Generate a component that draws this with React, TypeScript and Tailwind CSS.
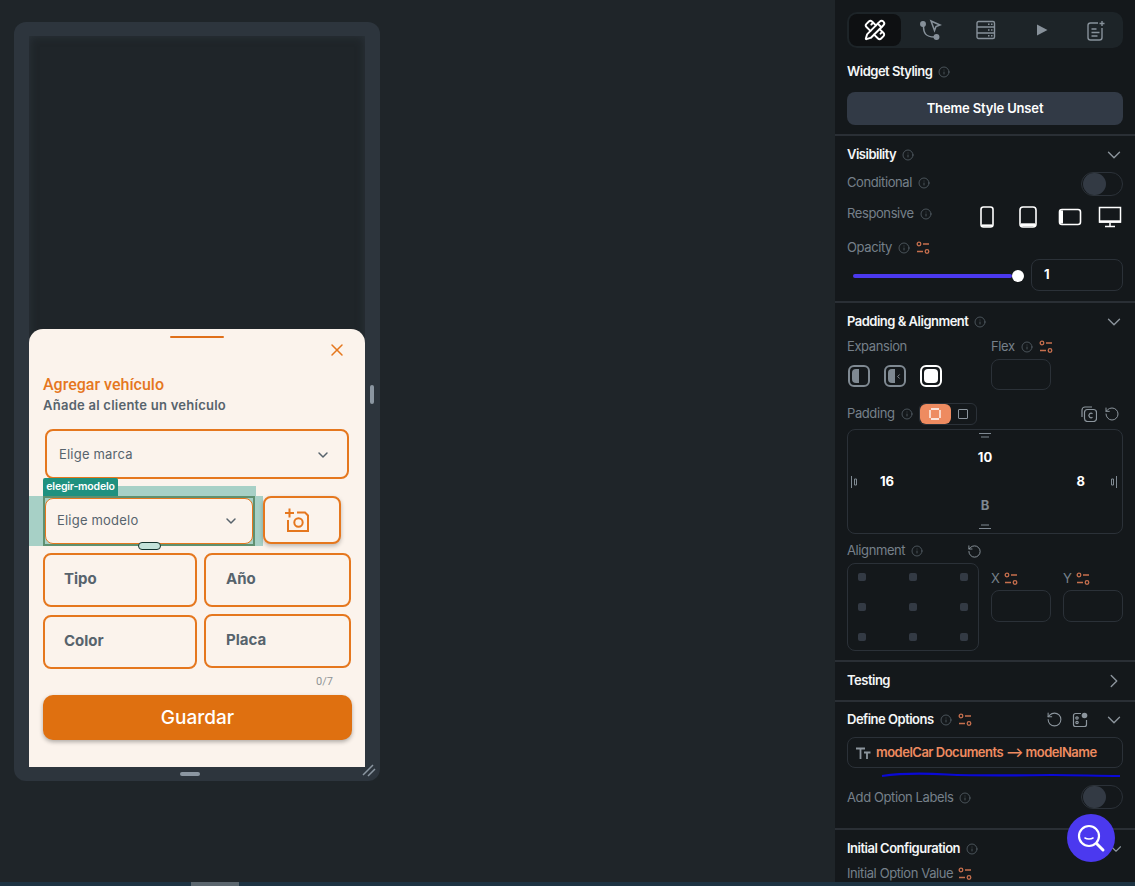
import { ChevronDown, ChevronRight, Info, PencilRuler, RotateCcw, X } from "lucide-react";
import type { ReactNode } from "react";

const sheetFont = "font-['Inter',sans-serif]";

function InfoDot() {
    return <Info size={12} strokeWidth={1.5} className="text-[#5b656e] shrink-0" />;
}

function VarIcon() {
    return (
        <svg width="14" height="14" viewBox="0 0 14 14" fill="none" stroke="#c66f4e" strokeWidth="1.3" className="shrink-0">
            <circle cx="3" cy="3" r="1.8" />
            <path d="M7 3h6M1 10.5h6" />
            <circle cx="11" cy="10.5" r="1.8" />
        </svg>
    );
}

function Heading({ children }: { children: ReactNode }) {
    return <span className="text-[13px] font-semibold tracking-[-0.5px] text-[#f4f6f7]">{children}</span>;
}

function Label({ children }: { children: ReactNode }) {
    return <span className="text-[13px] tracking-[-0.4px] text-[#76808a]">{children}</span>;
}

function Toggle() {
    return (
        <div className="flex h-6 w-[42px] items-center rounded-full border border-[#2b3138] px-[1px]">
            <div className="h-[22px] w-[23px] rounded-full bg-[#333a44]" />
        </div>
    );
}

function Field({ className, children }: { className: string; children?: ReactNode }) {
    return <div className={`rounded-lg border border-[#2b3138] ${className}`}>{children}</div>;
}

function DeviceIcons() {
    return (
        <div className="flex items-center">
            <svg width="16" height="24" viewBox="0 0 16 24" fill="none" stroke="#fff" strokeWidth="1.6">
                <rect x="2" y="2" width="12" height="20" rx="2.5" />
                <path d="M3 20.5h10" strokeWidth="2.2" />
            </svg>
            <svg width="20" height="24" viewBox="0 0 20 24" fill="none" stroke="#fff" strokeWidth="1.6" className="ml-[23px]">
                <rect x="2" y="2" width="16" height="20" rx="3" />
                <path d="M3 19.8h14" strokeWidth="3" />
            </svg>
            <svg width="24" height="20" viewBox="0 0 24 20" fill="none" stroke="#fff" strokeWidth="1.6" className="ml-[20px]">
                <rect x="1.5" y="2.5" width="21" height="15" rx="2.5" />
                <path d="M3.5 3.5v13" strokeWidth="3" />
            </svg>
            <svg width="24" height="24" viewBox="0 0 24 24" fill="none" stroke="#fff" strokeWidth="1.5" className="ml-[16px]">
                <rect x="1.5" y="2.5" width="21" height="14.5" />
                <path d="M1 16.5h22" strokeWidth="2.4" />
                <path d="M12 18v3M7 21.5h10" />
            </svg>
        </div>
    );
}

function TabBar() {
    return (
        <div className="flex h-9 items-center rounded-[10px] bg-[#1d2428] px-[2px]">
            <div className="flex h-8 w-[52px] items-center justify-center rounded-lg bg-[#0e1012]">
                <PencilRuler size={22} strokeWidth={2.1} className="text-white" />
            </div>
            <div className="flex flex-1 items-center">
                <svg width="22" height="22" viewBox="0 0 22 22" fill="none" stroke="#87919a" strokeWidth="1.5" className="ml-[19px]">
                    <circle cx="3" cy="5" r="2.2" fill="#87919a" />
                    <circle cx="16.5" cy="18" r="2.2" fill="#87919a" />
                    <path d="M3.5 7c0 7 2 11 11 11" />
                    <path d="M11 2l9 4-4 1.5-1.5 4z" />
                </svg>
                <svg width="20" height="20" viewBox="0 0 20 20" fill="none" stroke="#87919a" strokeWidth="1.4" className="ml-[34px]">
                    <rect x="1" y="1.5" width="17.5" height="17" rx="1.5" />
                    <path d="M1 7h17.5M1 13h17.5" />
                    <path d="M12 4.3h1.5M15 4.3h1.5M12 10h1.5M15 10h1.5M12 15.8h1.5M15 15.8h1.5" />
                </svg>
                <svg width="14" height="14" viewBox="0 0 14 14" fill="#87919a" className="ml-[39px]">
                    <path d="M2 1.5l10.5 5.5L2 12.5z" />
                </svg>
                <svg width="20" height="21" viewBox="0 0 20 21" fill="none" stroke="#87919a" strokeWidth="1.4" className="ml-[37px]">
                    <path d="M12 3H4.5A2.5 2.5 0 0 0 2 5.500v12A2.500 2.500 0 0 0 4.500 20h9a2.500 2.500 0 0 0 2.500-2.500V8" />
                    <path d="M5.500 9h5M5.500 12.500h8M5.500 16h6" />
                    <path d="M16 1v5M13.500 3.500h5" />
                </svg>
            </div>
        </div>
    );
}

function VisibilitySection() {
    return (
        <section className="h-[167px] border-b-2 border-[#2a2f35] px-3">
            <div className="flex h-9 items-center gap-[6px] pt-[2px]">
                <Heading>Visibility</Heading>
                <InfoDot />
                <ChevronDown size={22} strokeWidth={1.5} className="ml-auto mr-[-2px] text-[#8c959d]" />
            </div>
            <div className="flex h-6 items-start gap-[6px] pt-[1px]">
                <Label>Conditional</Label>
                <div className="mt-1"><InfoDot /></div>
                <div className="ml-auto mt-[-1px]"><Toggle /></div>
            </div>
            <div className="flex h-[41px] items-start gap-[6px] pt-[8px]">
                <Label>Responsive</Label>
                <div className="mt-1"><InfoDot /></div>
                <div className="ml-auto mr-[1px] mt-[1px]"><DeviceIcons /></div>
            </div>
            <div className="flex h-[22px] items-center gap-[6px]">
                <Label>Opacity</Label>
                <InfoDot />
                <VarIcon />
            </div>
            <div className="flex h-8 items-center">
                <div className="ml-[6px] mt-[1px] flex w-[171px] items-center">
                    <div className="h-1 flex-1 rounded-full bg-[#4b39ef]" />
                    <div className="h-3 w-3 rounded-full bg-white" />
                </div>
                <Field className="ml-auto flex h-8 w-[92px] items-center pl-[12px] text-[13px] font-bold text-white">1</Field>
            </div>
        </section>
    );
}

function PaddingBox() {
    const notch = "#7f8992";
    return (
        <div className="mt-[4px] flex h-[105px] flex-col items-center rounded-lg border border-[#2b3138] pt-[2px]">
            <svg width="14" height="8" viewBox="0 0 14 8" fill="none" stroke={notch}>
                <path d="M1 1.500h12M3 5h8" />
            </svg>
            <div className="mt-[6px] flex h-6 items-center text-[13px] font-bold text-white">10</div>
            <div className="flex h-6 w-full items-center pl-[2px] pr-[4px] text-[13px] font-bold text-white">
                <svg width="8" height="14" viewBox="0 0 8 14" fill="none" stroke={notch}>
                    <path d="M1.500 1v12M4.500 4h2v6h-2z" />
                </svg>
                <span className="ml-[22px]">16</span>
                <span className="ml-auto mr-[25px]">8</span>
                <svg width="8" height="14" viewBox="0 0 8 14" fill="none" stroke={notch}>
                    <path d="M6.500 1v12M1.500 4h2v6h-2z" />
                </svg>
            </div>
            <div className="flex h-6 items-center text-[13px] font-bold text-[#7f8992]">B</div>
            <svg width="14" height="8" viewBox="0 0 14 8" fill="none" stroke={notch} className="mt-[5px]">
                <path d="M3 2h8M1 5.500h12" />
            </svg>
        </div>
    );
}

function PaddingSection() {
    return (
        <section className="h-[359px] border-b-2 border-[#2a2f35] px-3">
            <div className="flex h-[34px] items-center gap-[6px] pt-[3px]">
                <Heading>Padding &amp; Alignment</Heading>
                <InfoDot />
                <ChevronDown size={22} strokeWidth={1.5} className="ml-auto mr-[-2px] text-[#8c959d]" />
            </div>
            <div className="flex h-[54px]">
                <div className="w-[144px]">
                    <div className="flex h-5 items-center"><Label>Expansion</Label></div>
                    <div className="mt-[8px] flex items-center gap-[14px] pl-[1px]">
                        <div className="h-[22px] w-[22px] rounded-md border-2 border-[#7f8992] p-[2px]">
                            <div className="h-full w-[7px] rounded-l-sm bg-[#7f8992]" />
                        </div>
                        <div className="flex h-[22px] w-[22px] items-center rounded-md border-2 border-[#7f8992] p-[2px]">
                            <div className="h-full w-[9px] rounded-l-sm bg-[#7f8992]" />
                            <ChevronDown size={9} strokeWidth={2.5} className="rotate-90 text-[#a7afb6]" />
                        </div>
                        <div className="h-[22px] w-[22px] rounded-md border-2 border-white p-[2px]">
                            <div className="h-full w-full rounded-sm bg-white" />
                        </div>
                    </div>
                </div>
                <div>
                    <div className="flex h-5 items-center gap-[6px]">
                        <Label>Flex</Label>
                        <InfoDot />
                        <VarIcon />
                    </div>
                    <Field className="mt-[2px] h-[31px] w-[60px]" />
                </div>
            </div>
            <div className="mt-3 flex h-[22px] items-center gap-[6px]">
                <Label>Padding</Label>
                <InfoDot />
                <div className="flex h-[22px] w-[58px] items-center rounded-md border border-[#2b3138]">
                    <div className="flex h-[20px] w-[31px] items-center justify-center rounded-md bg-[#ee8b60]">
                        <svg width="14" height="14" viewBox="0 0 14 14" fill="none" stroke="#fff" strokeWidth="1.300">
                            <path d="M3 2h8M3 12h8M2 3v8M12 3v8" />
                        </svg>
                    </div>
                    <div className="flex flex-1 items-center justify-center">
                        <div className="h-[10px] w-[10px] rounded-[1px] border border-[#8c959d]" />
                    </div>
                </div>
                <div className="ml-auto flex items-center gap-[7px] pr-[3px]">
                    <svg width="16" height="16" viewBox="0 0 16 16" fill="none" stroke="#8c959d" strokeWidth="1.200">
                        <rect x="3.500" y="3.500" width="12" height="12" rx="3" />
                        <path d="M1 11V4a3 3 0 0 1 3-3h7" />
                        <path d="M11.500 7.800a2.200 2.200 0 1 0 0 3.400" />
                    </svg>
                    <RotateCcw size={16} strokeWidth={1.5} className="text-[#8c959d]" />
                </div>
            </div>
            <PaddingBox />
            <div className="mt-[7px] flex h-5 items-center gap-[6px]">
                <Label>Alignment</Label>
                <InfoDot />
                <RotateCcw size={15} strokeWidth={1.500} className="ml-[38px] text-[#8c959d]" />
            </div>
            <div className="mt-[2px] flex h-[88px]">
                <div className="grid h-[88px] w-[132px] grid-cols-[8px_8px_8px] content-between justify-between rounded-lg border border-[#2b3138] px-[10px] py-[9px]">
                    {Array.from({ length: 9 }).map((_, i) => (
                        <div key={i} className="h-2 w-2 rounded-[2px] bg-[#333a44]" />
                    ))}
                </div>
                <div className="ml-3 mt-[6px] flex gap-3">
                    {["X", "Y"].map((axis) => (
                        <div key={axis}>
                            <div className="flex h-[19px] items-center gap-[5px]">
                                <Label>{axis}</Label>
                                <VarIcon />
                            </div>
                            <Field className="mt-[2px] h-8 w-[60px]" />
                        </div>
                    ))}
                </div>
            </div>
        </section>
    );
}

function DefineOptionsSection() {
    return (
        <section className="h-[128px] border-b-2 border-[#2a2f35] px-3">
            <div className="flex h-[35px] items-center gap-[6px]">
                <Heading>Define Options</Heading>
                <InfoDot />
                <VarIcon />
                <div className="ml-auto flex items-center gap-[9px]">
                    <RotateCcw size={17} strokeWidth={1.500} className="text-[#8c959d]" />
                    <svg width="16" height="16" viewBox="0 0 16 16" fill="none" stroke="#8c959d" strokeWidth="1.200">
                        <path d="M9 1.500H3.500a2 2 0 0 0-2 2v9a2 2 0 0 0 2 2h9a2 2 0 0 0 2-2V8" />
                        <circle cx="5" cy="6" r="1.200" />
                        <circle cx="5" cy="10.500" r="1.200" />
                        <circle cx="12.500" cy="3.500" r="2.800" fill="#8c959d" stroke="none" />
                    </svg>
                    <ChevronDown size={22} strokeWidth={1.5} className="ml-[6px] mr-[-2px] text-[#8c959d]" />
                </div>
            </div>
            <Field className="flex h-[31px] items-center gap-[5px] pl-[7px] rounded-[10px]">
                <svg width="16" height="14" viewBox="0 0 16 14" fill="none" stroke="#8c959d" strokeWidth="1.800">
                    <path d="M1 2.500h9M5.500 2.500V13M9 6.500h6.500M12 6.500V13" />
                </svg>
                <span className="text-[13px] font-semibold tracking-[-0.5px] text-[#ee8b60]">modelCar Documents ⟶ modelName</span>
            </Field>
            <svg width="276" height="8" viewBox="0 0 276 8" fill="none" className="mt-[2px] block">
                <path d="M35 6C55 3 75 3 100 4.500C130 6 170 5.500 205 5C230 5 250 6 273 6" stroke="#0a09d6" strokeWidth="2.200" />
            </svg>
            <div className="mt-[7px] flex h-6 items-center gap-[6px]">
                <div className="mt-[2px] flex items-center gap-[6px]">
                    <Label>Add Option Labels</Label>
                    <InfoDot />
                </div>
                <div className="ml-auto"><Toggle /></div>
            </div>
        </section>
    );
}

function PropertyPanel() {
    return (
        <aside className="relative h-full w-[300px] shrink-0 overflow-hidden bg-[#14181b] font-['Inter',sans-serif]">
            <section className="h-[136px] border-b-2 border-[#2a2f35] px-3 pt-3">
                <TabBar />
                <div className="mt-[14px] flex h-5 items-center gap-[6px]">
                    <Heading>Widget Styling</Heading>
                    <InfoDot />
                </div>
                <div className="mt-[10px] flex h-[33px] items-center justify-center rounded-lg bg-[#323a46] text-[13px] font-semibold tracking-[-0.15px] text-white">
                    Theme Style Unset
                </div>
            </section>
            <VisibilitySection />
            <PaddingSection />
            <section className="flex h-[40px] items-center border-b-2 border-[#2a2f35] px-3">
                <Heading>Testing</Heading>
                <ChevronRight size={22} strokeWidth={1.5} className="ml-auto mr-[-2px] text-[#8c959d]" />
            </section>
            <DefineOptionsSection />
            <section className="px-3">
                <div className="flex h-[36px] items-center gap-[6px] pt-[2px]">
                    <Heading>Initial Configuration</Heading>
                    <InfoDot />
                    <ChevronDown size={18} strokeWidth={1.5} className="ml-auto mr-[-2px] text-[#8c959d]" />
                </div>
                <div className="flex h-[16px] items-center gap-[5px]">
                    <Label>Initial Option Value</Label>
                    <VarIcon />
                </div>
            </section>
            <div className="absolute left-[232px] top-[814px] flex h-12 w-12 items-center justify-center rounded-full bg-[#4b39ef]">
                <svg width="30" height="30" viewBox="0 0 30 30" fill="none" stroke="#fff" strokeWidth="2.200" strokeLinecap="round">
                    <circle cx="13" cy="13" r="10" />
                    <path d="M9 15c2 1.300 6 1.300 8 0" strokeWidth="1.600" />
                    <path d="M21 21l6 6" strokeWidth="3" />
                </svg>
            </div>
        </aside>
    );
}

function ChevronSelect({ label, className }: { label: string; className: string }) {
    return (
        <div className={`flex items-center rounded-lg ${className}`}>
            <span className="text-[13px] tracking-[0.2px] text-[#57636c]">{label}</span>
            <ChevronDown size={16} strokeWidth={2.2} className="ml-auto text-[#57636c]" />
        </div>
    );
}

function TextBox({ label, className }: { label: string; className: string }) {
    return (
        <div className={`flex h-[54px] items-center rounded-lg border-2 border-[#e5771e] pb-[2px] text-[15px] font-bold text-[#57636c] ${className}`}>
            {label}
        </div>
    );
}

function BottomSheet() {
    return (
        <div className={`flex h-[438px] flex-col rounded-t-[14px] bg-[#fbf3ec] ${sheetFont}`}>
            <div className="mx-auto mt-[7px] h-[2px] w-[54px] rounded-full bg-[#e0701a]" />
            <X size={20} strokeWidth={1.800} className="ml-auto mr-[18px] mt-[2px] text-[#e5771e]" />
            <h2 className="ml-[14px] mt-[15px] font-['Roboto',sans-serif] text-[16px] font-medium leading-5 text-[#e5771e]">Agregar vehículo</h2>
            <p className="ml-[14px] mt-[2px] text-[13px] font-semibold leading-4 tracking-[0.25px] text-[#57636c]">Añade al cliente un vehículo</p>
            <ChevronSelect label="Elige marca" className="ml-[16px] mt-[16px] h-[50px] w-[304px] border-2 border-[#e5771e] pl-[12px] pr-[16px] pt-[1px]" />

            <div className="relative ml-[14px] mt-[17px] flex gap-[8px]">
                {/* padding overlay of the selected widget */}
                <div className="absolute left-[-14px] top-0 h-[50px] w-[234px] bg-[#a7d0c6]" />
                <div className="absolute left-0 top-[-10px] h-[10px] w-[213px] bg-[#a7d0c6]" />
                <div className="absolute left-0 top-[-18px] flex h-[18px] w-[75px] items-center justify-center rounded-t-[2px] bg-[#1f917f] text-[10.500px] font-semibold tracking-[-0.2px] text-white">
                    elegir-modelo
                </div>
                <div className="relative h-[50px] w-[212px] border-2 border-[#5f9070]">
                    <ChevronSelect label="Elige modelo" className="h-full w-full border border-[#e5771e] bg-[#fbf3ec] pl-[11px] pr-[13px]" />
                    <div className="absolute bottom-[-6px] left-[93px] h-[8px] w-[23px] rounded-full border border-[#14332e] bg-[#c4e2da]" />
                </div>
                <div className="relative flex h-[48px] w-[78px] items-center justify-center rounded-lg border-2 border-[#e5771e] bg-[#fbf3ec] pr-[8px] shadow-[0_2px_4px_rgba(0,0,0,0.25)]">
                    <svg width="28" height="26" viewBox="0 0 28 26" fill="none" stroke="#e5771e" strokeWidth="2">
                        <path d="M1 6h9M5.500 1.500v9" />
                        <path d="M4 13v11h20V8.500L21 5.500h-8" />
                        <circle cx="14.500" cy="15.500" r="4.200" />
                    </svg>
                </div>
            </div>

            <div className="ml-[14px] mt-[7px] flex gap-[7px]">
                <TextBox label="Tipo" className="w-[154px] pl-[19px]" />
                <TextBox label="Año" className="w-[147px] pl-[20px]" />
            </div>
            <div className="ml-[14px] mt-[7px] flex gap-[7px]">
                <TextBox label="Color" className="mt-[1px] w-[154px] pl-[19px]" />
                <TextBox label="Placa" className="w-[147px] pl-[20px]" />
            </div>
            <div className="mr-[32px] mt-[6px] h-[14px] text-right font-['Roboto',sans-serif] text-[11px] leading-[14px] text-[#8f9396]">0/7</div>
            <button className="ml-[14px] mt-[6px] h-[45px] w-[309px] rounded-[10px] bg-[#df7010] pt-[2px] text-[19px] font-medium text-white shadow-[0_2px_4px_rgba(0,0,0,0.3)]">
                Guardar
            </button>
        </div>
    );
}

function PhonePreview() {
    return (
        <div className="relative flex h-[759px] w-[366px] flex-col justify-end rounded-[12px] bg-[#2d353d] px-[15px] pb-[14px]">
            <div className="absolute inset-x-[15px] top-[14px] bottom-[14px] bg-[#1f2529] shadow-[inset_0_0_10px_rgba(45,53,61,0.9)]" />
            <div className="relative">
                <BottomSheet />
            </div>
            <div className="absolute bottom-[5px] left-[166px] h-1 w-5 rounded-full bg-[#8b96a1]" />
            <svg width="14" height="14" viewBox="0 0 14 14" fill="none" stroke="#8b96a1" strokeWidth="1.500" className="absolute bottom-[3px] right-[4px]">
                <path d="M1 11L11 1M6 12l7-7" />
            </svg>
            <div className="absolute left-[356px] top-[363px] h-[19px] w-1 rounded-full bg-[#8b96a1]" />
        </div>
    );
}

export default function App() {
    return (
        <div className="flex h-[886px] w-[1135px] flex-col overflow-hidden bg-[#1f2529]">
            <div className="flex min-h-0 flex-1">
                <main className="flex-1 pl-[14px] pt-[22px]">
                    <PhonePreview />
                </main>
                <PropertyPanel />
            </div>
            <div className="h-1 shrink-0 bg-[#1d3342] pl-[191px]">
                <div className="h-full w-12 bg-[#5b666e]" />
            </div>
        </div>
    );
}
